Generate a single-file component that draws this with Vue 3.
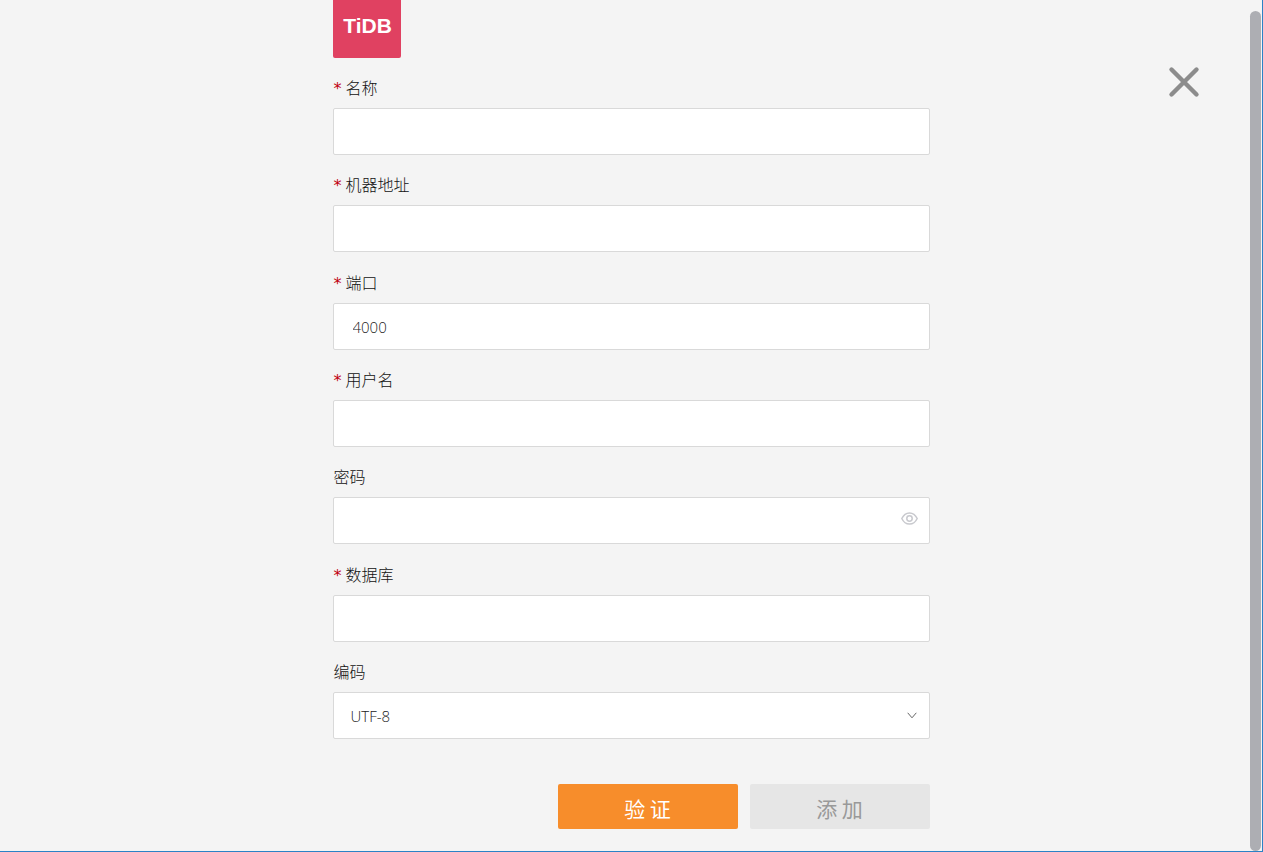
<script setup>
import { ref, reactive } from 'vue'

const form = reactive({
  name: '',
  host: '',
  port: '4000',
  user: '',
  password: '',
  database: '',
  encoding: 'UTF-8',
})
const showPassword = ref(false)

const fields = [
  { key: 'name', label: '名称', required: true },
  { key: 'host', label: '机器地址', required: true },
  { key: 'port', label: '端口', required: true },
  { key: 'user', label: '用户名', required: true },
  { key: 'password', label: '密码', type: 'password' },
  { key: 'database', label: '数据库', required: true },
  { key: 'encoding', label: '编码', type: 'select' },
]
</script>

<template>
  <main class="dialog">
    <form class="form" @submit.prevent>
      <div class="logo">TiDB</div>
      <div class="fields">
        <div v-for="f in fields" :key="f.key" class="field">
          <label :for="f.key" class="label">
            <span v-if="f.required" class="star">*</span>{{ f.label }}
          </label>
          <div class="control">
            <select v-if="f.type === 'select'" :id="f.key" v-model="form[f.key]" class="box select">
              <option>UTF-8</option>
            </select>
            <input
              v-else
              :id="f.key"
              v-model="form[f.key]"
              class="box"
              :type="f.type === 'password' && !showPassword ? 'password' : 'text'"
            />
            <svg v-if="f.type === 'select'" class="arrow" viewBox="0 0 10 7" aria-hidden="true">
              <path d="M0.7 0.8 L5 5.8 L9.3 0.8" />
            </svg>
            <button
              v-if="f.type === 'password'"
              type="button"
              class="eye"
              aria-label="显示密码"
              @click="showPassword = !showPassword"
            >
              <svg viewBox="0 0 17 13" aria-hidden="true">
                <path d="M0.8 6.5 C2.6 2.7 5.2 0.9 8.5 0.9 S14.4 2.7 16.2 6.5 C14.4 10.3 11.8 12.1 8.5 12.1 S2.6 10.3 0.8 6.5 Z" />
                <circle cx="8.5" cy="6.5" r="2.7" />
              </svg>
            </button>
          </div>
        </div>
      </div>
      <div class="actions">
        <button type="submit" class="btn primary">验 证</button>
        <button type="button" class="btn" disabled>添 加</button>
      </div>
    </form>
    <button type="button" class="close" aria-label="关闭">
      <svg viewBox="0 0 32 32" aria-hidden="true">
        <path d="M3.5 3.5 L28.5 28.5 M28.5 3.5 L3.5 28.5" />
      </svg>
    </button>
    <div class="thumb"></div>
  </main>
</template>

<style>
body {
  background: #f4f4f4;
}
</style>

<style scoped>
.dialog {
  position: relative;
  box-sizing: border-box;
  min-height: 100vh;
  display: flex;
  justify-content: center;
  border-right: 1px solid #2b82c6;
  border-bottom: 1px solid #2b82c6;
  background: #f4f4f4;
  font-family: "Open Sans", "Noto Sans CJK SC", sans-serif;
  color: #333;
}
.form {
  display: flex;
  flex-direction: column;
  width: 100%;
  max-width: 597px;
  padding-bottom: 22px;
}
.logo {
  box-sizing: border-box;
  width: 68px;
  height: 58px;
  padding: 14px 0 0 2px;
  border-radius: 0 0 2px 2px;
  background: #e04161;
  color: #fff;
  font: bold 21px/24px "Liberation Sans", sans-serif;
  text-align: center;
}
.fields {
  flex: 1;
  display: flex;
  flex-direction: column;
  justify-content: space-between;
  padding: 17px 0 45px;
}
.label {
  display: flex;
  align-items: center;
  height: 24px;
  margin-bottom: 9px;
  padding-left: 1px;
  color: #111;
  font-size: 16px;
  line-height: 24px;
  font-family: "Noto Sans CJK SC", sans-serif;
  font-weight: 300;
}
.star {
  width: 12px;
  height: 16px;
  color: #c00010;
  font: 16px/20px "DejaVu Sans", sans-serif;
}
.control {
  position: relative;
}
.box {
  display: block;
  box-sizing: border-box;
  width: 100%;
  height: 47px;
  padding: 2px 19px 0;
  border: 1px solid #d9d9d9;
  border-radius: 2px;
  outline: none;
  background: #fff;
  color: #222;
  font: 300 15px/24px "Open Sans", "Noto Sans CJK SC", sans-serif;
}
.select {
  appearance: none;
  padding: 2px 17px 0;
}
.arrow {
  position: absolute;
  right: 13px;
  top: 20px;
  width: 10px;
  height: 7px;
  fill: none;
  stroke: #666;
  stroke-width: 1;
  pointer-events: none;
}
.eye {
  position: absolute;
  right: 12px;
  top: 15px;
  padding: 0;
  border: 0;
  background: none;
}
.eye svg {
  display: block;
  width: 17px;
  height: 13px;
  fill: none;
  stroke: #c8c9ce;
  stroke-width: 1.5;
}
.actions {
  display: flex;
  justify-content: flex-end;
  gap: 12px;
}
.btn {
  width: 180px;
  height: 45px;
  padding: 2px 0 0;
  border: 0;
  border-radius: 2px;
  background: #e6e6e6;
  color: #999;
  font: 21px/30px "Noto Sans CJK SC", sans-serif;
}
.primary {
  background: #f78d2b;
  color: #fff;
}
.close {
  position: absolute;
  top: 66px;
  right: 62px;
  padding: 0;
  border: 0;
  background: none;
}
.close svg {
  display: block;
  width: 32px;
  height: 32px;
  fill: none;
  stroke: #8c8c8c;
  stroke-width: 4.4;
  stroke-linecap: round;
}
.thumb {
  position: absolute;
  top: 11px;
  right: 1px;
  bottom: 0;
  width: 11px;
  border-radius: 6px;
  background: #adaeb3;
}
</style>
